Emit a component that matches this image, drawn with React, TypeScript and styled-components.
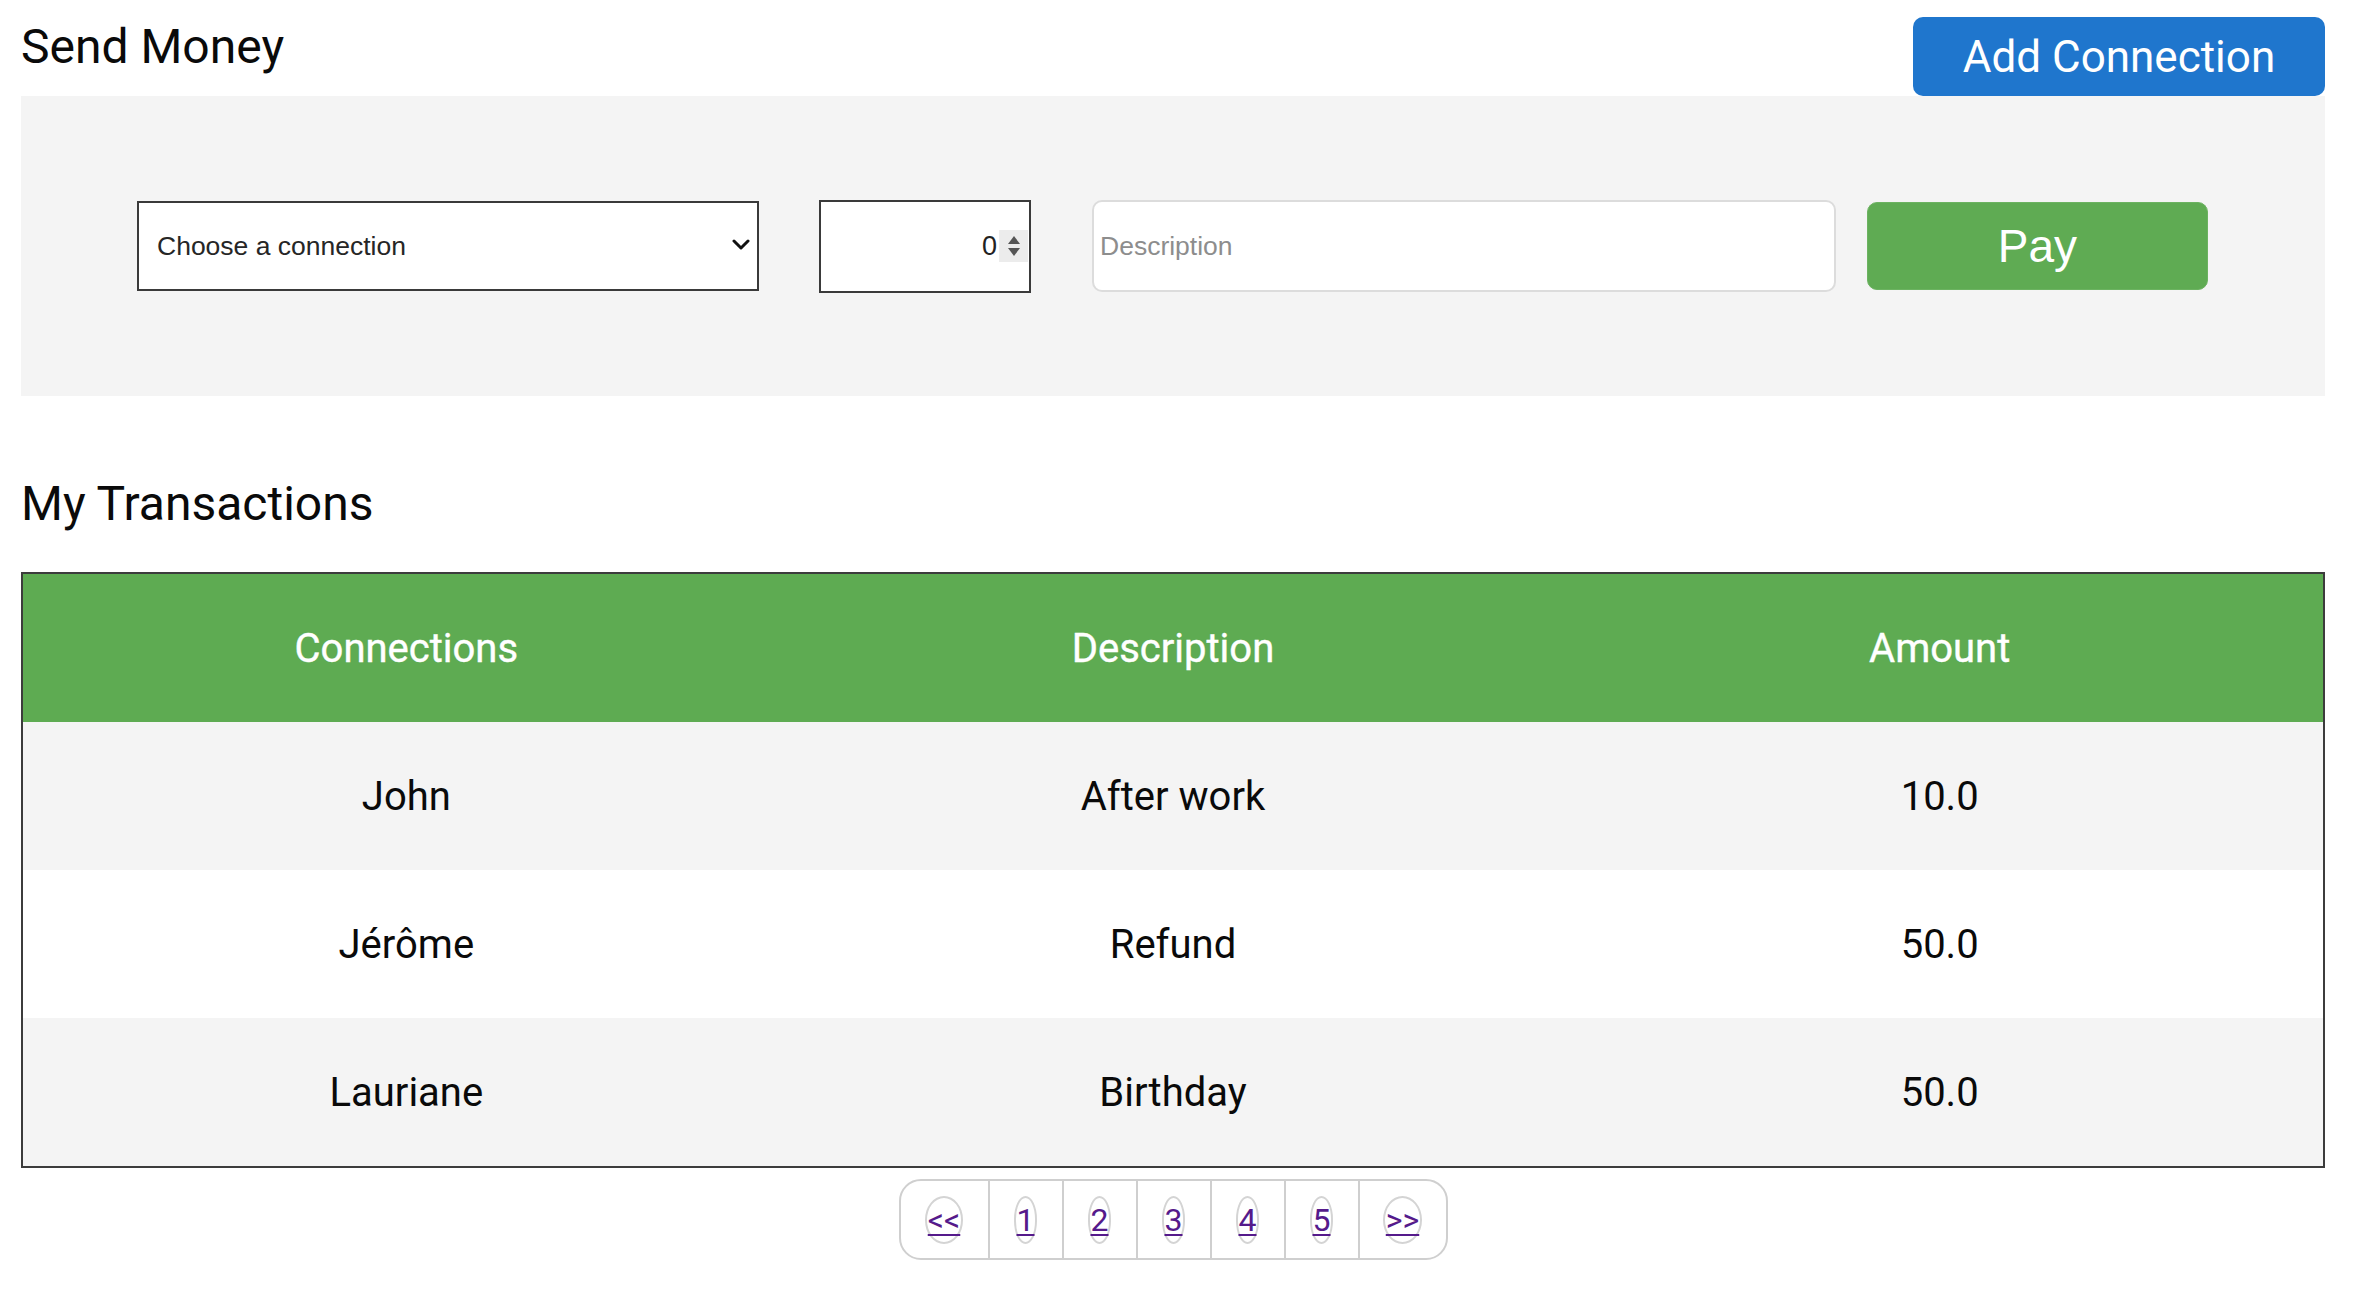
import React from "react";
import styled, { createGlobalStyle } from "styled-components";

const GlobalStyle = createGlobalStyle`
  html, body {
    margin: 0;
    padding: 0;
    background: #ffffff;
    font-family: Roboto, "Liberation Sans", Arial, sans-serif;
    color: #111;
  }
  * { box-sizing: border-box; }
`;

const Page = styled.div`
  width: 2304px;
  margin-left: 21px;
  display: flex;
  flex-direction: column;
`;

const Header = styled.div`
  display: flex;
  justify-content: space-between;
  align-items: flex-start;
  padding-top: 17px;
`;

const Title = styled.h2<{ $top?: number; $bottom?: number }>`
  margin: ${(p) => `${p.$top ?? 0}px 0 ${p.$bottom ?? 0}px 0`};
  font-family: Roboto, sans-serif;
  font-weight: 400;
  font-size: 48px;
  line-height: 56px;
  color: #0a0a0a;
`;

const BlueButton = styled.button`
  width: 412px;
  height: 79px;
  border: none;
  border-radius: 10px;
  background: #1f76cd;
  color: #fff;
  font-family: Roboto, sans-serif;
  font-size: 44px;
  font-weight: 400;
  padding: 0;
  cursor: pointer;
`;

const Panel = styled.div`
  height: 300px;
  background: #f4f4f4;
  display: flex;
  align-items: center;
  padding-left: 116px;
`;

const SelectWrap = styled.div`
  position: relative;
  width: 622px;
  height: 90px;
`;

const Select = styled.select`
  appearance: none;
  -webkit-appearance: none;
  width: 100%;
  height: 100%;
  border: 2px solid #3a3a3a;
  border-radius: 0;
  background: #fff;
  padding-left: 18px;
  font-family: "Liberation Sans", Arial, sans-serif;
  font-size: 26.5px;
  color: #262626;
  outline: none;
`;

const Chevron = styled.svg`
  position: absolute;
  right: 9px;
  top: 38px;
  pointer-events: none;
`;

const NumberBox = styled.div`
  margin-left: 60px;
  width: 212px;
  height: 93px;
  border: 2px solid #3a3a3a;
  background: #fff;
  display: flex;
  align-items: center;
  padding-right: 1px;
`;

const NumberInput = styled.input`
  flex: 1;
  min-width: 0;
  border: none;
  outline: none;
  background: transparent;
  text-align: right;
  font-family: "Liberation Sans", Arial, sans-serif;
  font-size: 27px;
  color: #222;
  padding: 0 2px 0 0;
`;

const Spinner = styled.div`
  width: 29px;
  height: 32px;
  background: #ececec;
  display: flex;
  align-items: center;
  justify-content: center;
`;

const TextInput = styled.input`
  margin-left: 61px;
  width: 744px;
  height: 92px;
  border: 2px solid #dcdcdc;
  border-radius: 10px;
  background: #fff;
  padding-left: 6px;
  font-family: "Liberation Sans", Arial, sans-serif;
  font-size: 26.5px;
  color: #222;
  outline: none;
  &::placeholder {
    color: #8d8d8d;
  }
`;

const PayButton = styled.button`
  margin-left: 31px;
  width: 341px;
  height: 88px;
  border: 1px solid #6cb361;
  border-radius: 10px;
  background: #5fab53;
  color: #fff;
  font-family: "Liberation Sans", Arial, sans-serif;
  font-size: 46px;
  padding: 0;
  cursor: pointer;
`;

const Table = styled.table`
  width: 2304px;
  border: 2px solid #3c3c3c;
  border-collapse: separate;
  border-spacing: 0;
  table-layout: fixed;
`;

const HeadCell = styled.th`
  height: 148px;
  background: #5eab52;
  color: #fff;
  font-family: Roboto, sans-serif;
  font-weight: 400;
  font-size: 40px;
  text-align: center;
  padding: 0;
  -webkit-text-stroke: 0.4px #fff;
`;

const Row = styled.tr<{ $shade: boolean }>`
  background: ${(p) => (p.$shade ? "#f4f4f4" : "#ffffff")};
`;

const Cell = styled.td`
  height: 148px;
  font-family: Roboto, sans-serif;
  font-size: 40px;
  color: #0a0a0a;
  text-align: center;
  padding: 0;
`;

const PagerWrap = styled.div`
  display: flex;
  justify-content: center;
  margin-top: 11px;
`;

const Pager = styled.nav`
  display: flex;
  height: 81px;
  border: 2px solid #cfcfcf;
  border-radius: 22px;
  overflow: hidden;
`;

const PageCell = styled.div<{ $w: number; $first?: boolean }>`
  width: ${(p) => p.$w}px;
  border-left: ${(p) => (p.$first ? "none" : "2px solid #cfcfcf")};
  display: flex;
  align-items: center;
  justify-content: center;
`;

const PageLink = styled.a`
  display: inline-block;
  color: #551a8b;
  text-decoration: underline;
  text-decoration-thickness: 2px;
  text-underline-offset: 3px;
  font-family: Roboto, sans-serif;
  font-size: 32px;
  line-height: 34px;
  padding: 5px 1px;
  border: 2px solid #d4d4d4;
  border-radius: 50%;
  cursor: pointer;
`;

const rows = [
  { name: "John", desc: "After work", amount: "10.0" },
  { name: "Jérôme", desc: "Refund", amount: "50.0" },
  { name: "Lauriane", desc: "Birthday", amount: "50.0" },
];

const pages = [
  { label: "<<", w: 87 },
  { label: "1", w: 74 },
  { label: "2", w: 74 },
  { label: "3", w: 74 },
  { label: "4", w: 74 },
  { label: "5", w: 74 },
  { label: ">>", w: 88 },
];

export default function App() {
  return (
    <>
      <GlobalStyle />
      <Page>
        <Header>
          <Title $top={2}>Send Money</Title>
          <BlueButton>Add Connection</BlueButton>
        </Header>
        <Panel>
          <SelectWrap>
            <Select defaultValue="">
              <option value="">Choose a connection</option>
              <option value="john">John</option>
              <option value="jerome">Jérôme</option>
              <option value="lauriane">Lauriane</option>
            </Select>
            <Chevron width="18" height="12" viewBox="0 0 18 12">
              <path d="M2 2 L9 9 L16 2" fill="none" stroke="#111" strokeWidth="3" strokeLinecap="round" strokeLinejoin="round" />
            </Chevron>
          </SelectWrap>
          <NumberBox>
            <NumberInput type="text" defaultValue="0" />
            <Spinner>
              <svg width="14" height="24" viewBox="0 0 14 24">
                <path d="M1 10 L7 2 L13 10 Z" fill="#555" />
                <path d="M1 14 L7 22 L13 14 Z" fill="#555" />
              </svg>
            </Spinner>
          </NumberBox>
          <TextInput type="text" placeholder="Description" />
          <PayButton>Pay</PayButton>
        </Panel>
        <Title $top={80} $bottom={40}>My Transactions</Title>
        <Table>
          <thead>
            <tr>
              <HeadCell>Connections</HeadCell>
              <HeadCell>Description</HeadCell>
              <HeadCell>Amount</HeadCell>
            </tr>
          </thead>
          <tbody>
            {rows.map((r, i) => (
              <Row key={r.name} $shade={i % 2 === 0}>
                <Cell>{r.name}</Cell>
                <Cell>{r.desc}</Cell>
                <Cell>{r.amount}</Cell>
              </Row>
            ))}
          </tbody>
        </Table>
        <PagerWrap>
          <Pager>
            {pages.map((p, i) => (
              <PageCell key={p.label} $w={p.w} $first={i === 0}>
                <PageLink>{p.label}</PageLink>
              </PageCell>
            ))}
          </Pager>
        </PagerWrap>
      </Page>
    </>
  );
}
